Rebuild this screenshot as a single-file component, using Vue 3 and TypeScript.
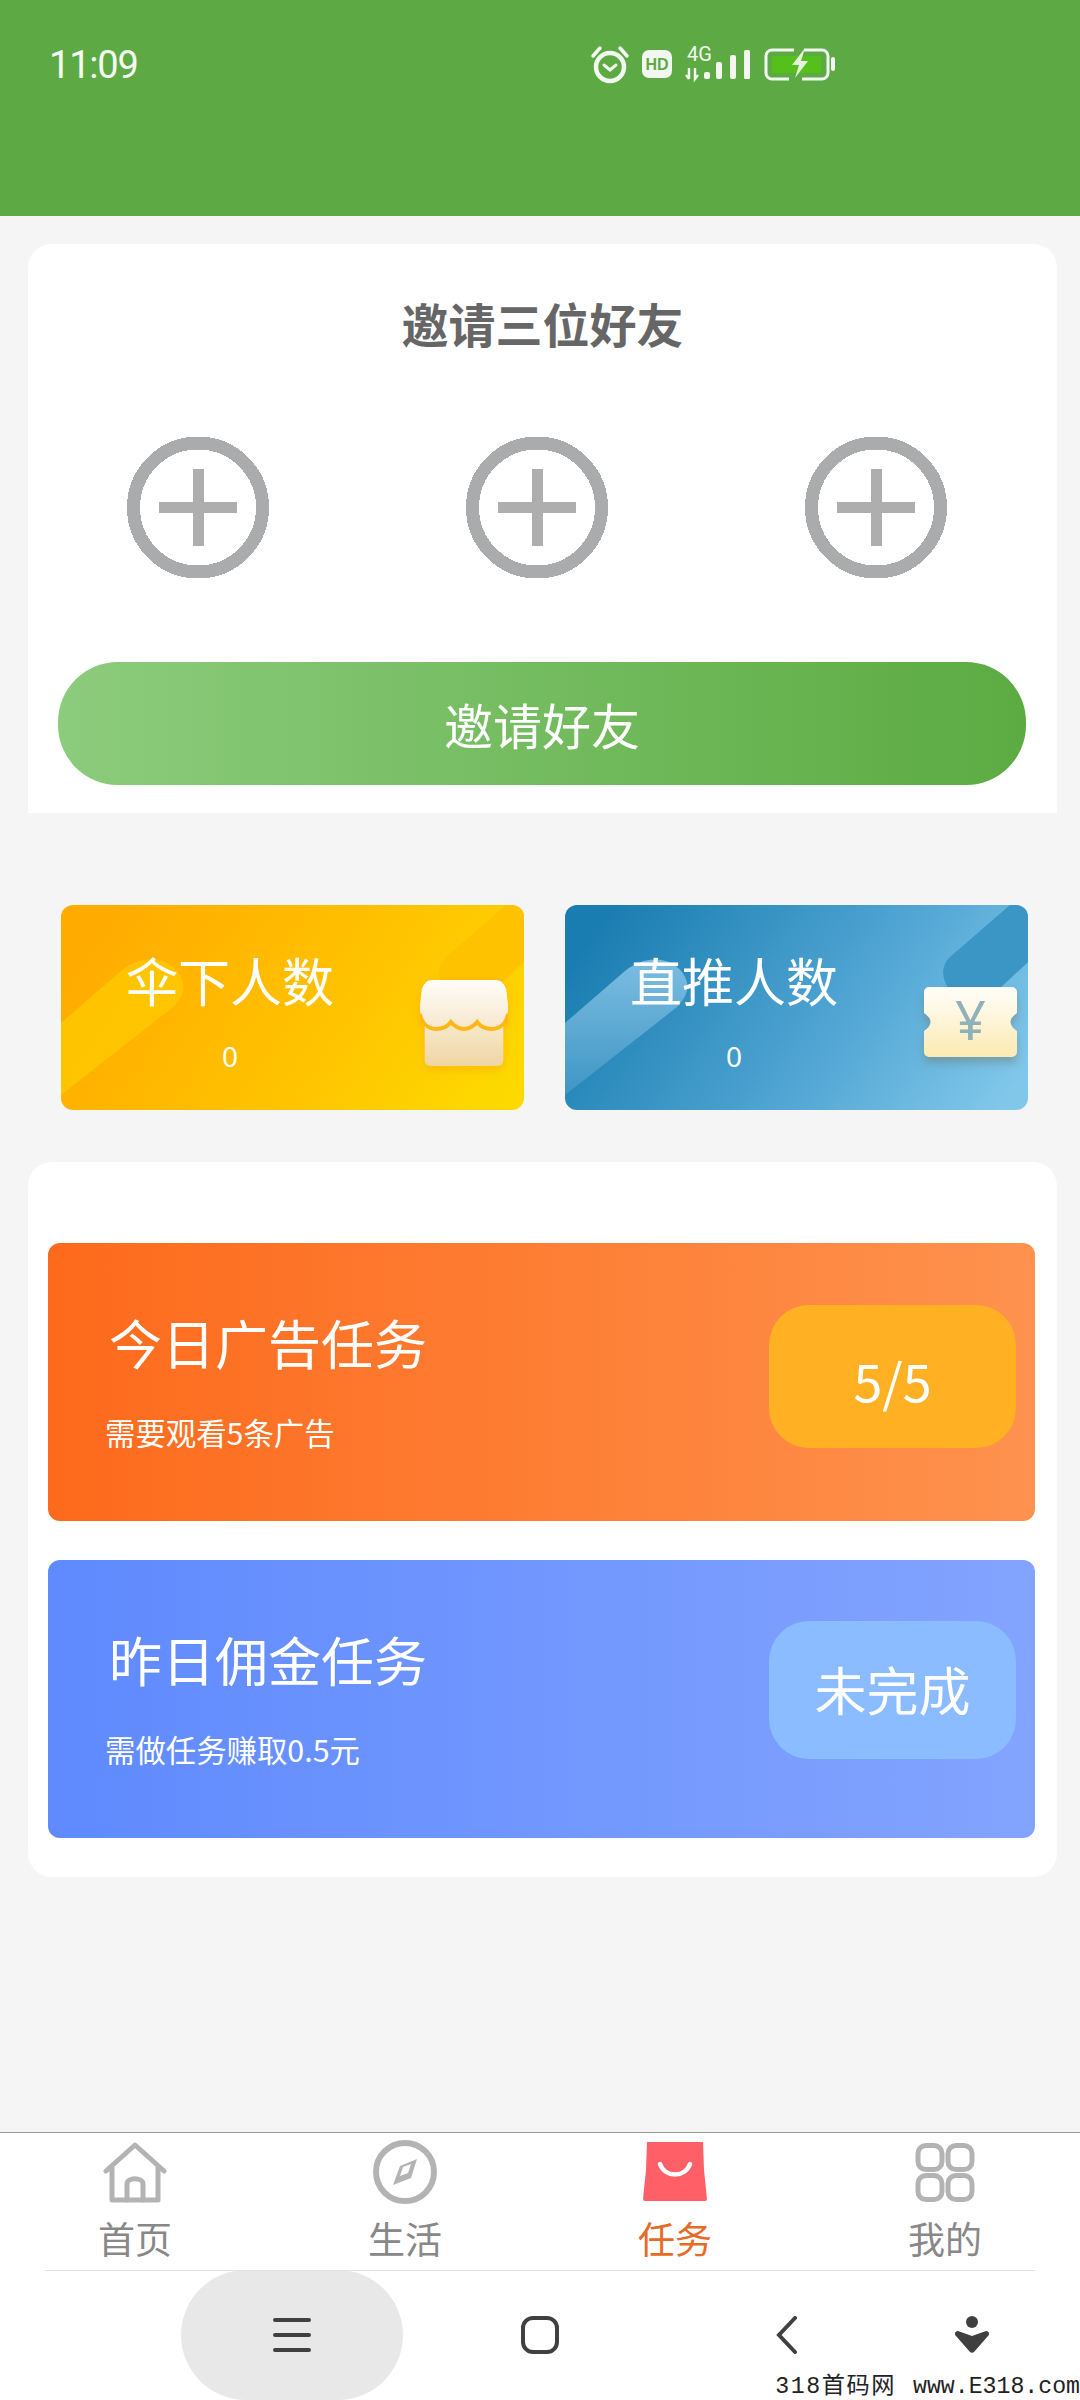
<script setup lang="ts">
interface Task {
  title: string
  desc: string
  badge: string
  tone: string
}

const tasks: Task[] = [
  { title: '今日广告任务', desc: '需要观看5条广告', badge: '5/5', tone: 'orange' },
  { title: '昨日佣金任务', desc: '需做任务赚取0.5元', badge: '未完成', tone: 'blue' }
]

const tabs = ['首页', '生活', '任务', '我的']
</script>

<template>
  <div class="page">
    <header class="top">
      <span class="time">11:09</span>
      <svg class="status" width="260" height="54" viewBox="0 -10 260 54">
        <!-- alarm -->
        <g fill="none" stroke="#f2f8ef" stroke-linecap="round">
          <circle cx="20" cy="23" r="14" stroke-width="4.5" />
          <path d="M14 21l6 5 6-5" stroke-width="3" />
          <path d="M3 12l7-8M37 12l-7-8" stroke-width="3.5" />
        </g>
        <!-- hd -->
        <rect x="52" y="6" width="30" height="28" rx="7" fill="#f2f8ef" />
        <text x="67" y="25.5" class="hd">HD</text>
        <!-- 4g -->
        <text x="97" y="17" class="net">4G</text>
        <path d="M99 24v11M96 31l3 4M105 24v11l3-4" stroke="#f2f8ef" stroke-width="2.4" fill="none" />
        <g fill="#f2f8ef">
          <rect x="114" y="28" width="6" height="7" rx="2" />
          <rect x="126" y="18" width="6" height="17" rx="2" />
          <rect x="140" y="11" width="6" height="24" rx="2" />
          <rect x="154" y="6" width="6" height="29" rx="1.5" />
        </g>
        <!-- battery -->
        <rect x="182" y="12" width="49" height="17" rx="2" fill="#55c01a" />
        <path d="M204 6h-22a6 6 0 0 0-6 6v17a6 6 0 0 0 6 6h17M214 6h18a6 6 0 0 1 6 6v17a6 6 0 0 1-6 6h-20" fill="none" stroke="#f2f8ef" stroke-width="3" />
        <path d="M215 4l-13 17h7l-4 13 13-17h-7z" fill="#e6f2e0" />
        <rect x="241" y="13" width="4" height="14" rx="2" fill="#f2f8ef" />
      </svg>
    </header>

    <section class="invite">
      <h2 class="invite-title">邀请三位好友</h2>
      <div class="slots">
        <svg v-for="n in 3" :key="n" class="slot" width="142" height="143" viewBox="0 0 142 143" shape-rendering="crispEdges">
          <circle cx="71" cy="71.5" r="64.5" fill="none" stroke="#aaabad" stroke-width="13" />
          <path d="M32 66h78v11H32zM65.5 33h11v77h-11z" fill="#aeaeae" />
        </svg>
      </div>
      <div class="invite-btn">邀请好友</div>
    </section>

    <section class="stats">
      <div class="stat yellow">
        <svg class="deco" width="463" height="205" viewBox="0 0 463 205">
          <path d="M0 118L60 66c22-18 50-14 60 6 5 10 2 20-8 30L0 190z" fill="#ffcb00" opacity=".75" />
          <path d="M445 0L385 52c-10 9-8 24 0 33h48l30-28V0z" fill="#ffc200" />
        </svg>
        <div class="stat-text">
          <div class="stat-name">伞下人数</div>
          <div class="stat-num">0</div>
        </div>
        <svg class="stat-icon" width="88" height="86" viewBox="0 0 94 86" preserveAspectRatio="none">
          <defs>
            <linearGradient id="awn" x1="0" y1="0" x2="0" y2="1">
              <stop offset="0" stop-color="#fffdf8" />
              <stop offset="1" stop-color="#f6e8cd" />
            </linearGradient>
            <linearGradient id="shop" x1="0" y1="0" x2="0" y2="1">
              <stop offset="0" stop-color="#f9ecd0" />
              <stop offset="1" stop-color="#efd5a3" />
            </linearGradient>
          </defs>
          <rect x="5" y="38" width="84" height="48" rx="6" fill="url(#shop)" />
          <path d="M13 0h68c6 0 9 4 11 9l2 15c1 14-5 24-17 24-7 0-13-3-16-7-3 4-9 7-14 7s-11-3-14-7c-3 4-9 7-16 7C5 48-1 38 0 24L2 9c2-5 5-9 11-9z" fill="url(#awn)" />
          <path d="M0 34c2 9 8 15 17 15 7 0 13-3 16-7 3 4 9 7 14 7s11-3 14-7c3 4 9 7 16 7 9 0 15-6 17-15" fill="none" stroke="#ffb717" stroke-width="4" />
        </svg>
      </div>
      <div class="stat sky">
        <svg class="deco" width="463" height="205" viewBox="0 0 463 205">
          <defs>
            <linearGradient id="beam" x1="0" y1="0" x2="0" y2="1">
              <stop offset="0" stop-color="#7cbde2" />
              <stop offset="1" stop-color="#3f96c4" />
            </linearGradient>
          </defs>
          <path d="M0 118L60 66c22-18 50-14 60 6 5 10 2 20-8 30L0 190z" fill="url(#beam)" />
          <path d="M445 0L385 52c-10 9-8 24 0 33h48l30-28V0z" fill="#3b95c5" />
        </svg>
        <div class="stat-text">
          <div class="stat-name">直推人数</div>
          <div class="stat-num">0</div>
        </div>
        <svg class="stat-icon ticket" width="93" height="100" viewBox="0 -15 93 100">
          <defs>
            <linearGradient id="tick" x1="0" y1="0" x2="0" y2="1">
              <stop offset="0" stop-color="#fffefa" />
              <stop offset="1" stop-color="#fdeab2" />
            </linearGradient>
          </defs>
          <path d="M5 0h83a5 5 0 0 1 5 5v21Q80 35 93 44v21a5 5 0 0 1-5 5H5a5 5 0 0 1-5-5V44Q13 35 0 26V5a5 5 0 0 1 5-5z" fill="url(#tick)" />
          <text x="46.5" y="53" class="yen">¥</text>
        </svg>
      </div>
    </section>

    <section class="tasks">
      <div v-for="t in tasks" :key="t.title" class="task" :class="t.tone">
        <div class="task-text">
          <div class="task-title">{{ t.title }}</div>
          <div class="task-desc">{{ t.desc }}</div>
        </div>
        <div class="task-badge">{{ t.badge }}</div>
      </div>
    </section>

    <nav class="tabbar">
      <div v-for="(tab, i) in tabs" :key="tab" class="tab" :class="{ on: i === 2 }">
        <svg v-if="i === 0" width="64" height="64" viewBox="0 -2 64 64" fill="none" stroke="#b3b3b3" stroke-width="5" stroke-linejoin="round" stroke-linecap="round">
          <path d="M3 29L32 3l29 26M9 26v32h46V26" />
          <path d="M24 58V42c0-7 16-7 16 0v16" />
        </svg>
        <svg v-else-if="i === 1" width="64" height="64" viewBox="0 0 64 64">
          <circle cx="32" cy="32" r="29" fill="none" stroke="#b3b3b3" stroke-width="6" />
          <path d="M44 19l-6 19-18 7 7-19zM38 24l-8 3-3 9 8-3z" fill="#b3b3b3" fill-rule="evenodd" />
        </svg>
        <svg v-else-if="i === 2" width="64" height="64" viewBox="0 0 64 64">
          <path d="M4 2h56l1 28 3 29-1 2H1l-1-2 3-29z" fill="#ff6067" />
          <path d="M17 24c5 14 25 14 30 0" fill="none" stroke="#fff" stroke-width="4.5" stroke-linecap="round" />
        </svg>
        <svg v-else width="64" height="64" viewBox="1 -2.5 64 64" fill="none" stroke="#b3b3b3" stroke-width="5">
          <rect x="6" y="3" width="24" height="24" rx="8" />
          <rect x="36" y="3" width="24" height="24" rx="8" />
          <rect x="6" y="33" width="24" height="24" rx="8" />
          <rect x="36" y="33" width="24" height="24" rx="8" />
        </svg>
        <span class="tab-label">{{ tab }}</span>
      </div>
    </nav>

    <footer class="sysnav">
      <div class="pill">
        <svg width="38" height="36" viewBox="0 0 38 36">
          <path d="M2 3h34M2 18h34M2 33h34" stroke="#404040" stroke-width="4" stroke-linecap="round" />
        </svg>
      </div>
      <svg class="nav-home" width="38" height="38" viewBox="0 0 38 38">
        <rect x="2" y="2" width="34" height="34" rx="10" fill="none" stroke="#404040" stroke-width="4" />
      </svg>
      <svg class="nav-back" width="22" height="38" viewBox="0 0 22 38">
        <path d="M19 2L3 19l16 17" fill="none" stroke="#404040" stroke-width="4" stroke-linecap="round" />
      </svg>
      <svg class="nav-acc" width="34" height="38" viewBox="0 0 34 38">
        <circle cx="17" cy="6" r="6" fill="#404040" />
        <path d="M3 15l14 5 14-5c3 0 4 3 2 5L19 36c-1 1-3 1-4 0L1 20c-2-2-1-5 2-5z" fill="#404040" />
      </svg>
      <span class="mark"><span class="mark-cn">318首码网</span> www.E318.com</span>
    </footer>
  </div>
</template>

<style>
html,
body {
  margin: 0;
  background: #f5f5f5;
}
</style>

<style scoped>
.page {
  width: 1080px;
  height: 2400px;
  background: #f5f5f5;
  display: flex;
  flex-direction: column;
  font-family: "Noto Sans CJK SC", "Noto Sans", sans-serif;
  overflow: hidden;
}

.top {
  height: 216px;
  flex: none;
  box-sizing: border-box;
  background: #5daa45;
  padding: 34px 0 0 49px;
  display: flex;
  align-items: flex-start;
}

.time {
  width: 90px;
  margin-top: 10px;
  font-family: Roboto, sans-serif;
  font-size: 38px;
  line-height: 42px;
  letter-spacing: -1.2px;
  color: #f4faf0;
}

.status {
  margin-left: 451px;
}

.hd {
  font-family: "Liberation Sans", sans-serif;
  font-size: 16px;
  font-weight: 700;
  fill: #5daa45;
  text-anchor: middle;
}

.net {
  font-family: Roboto, sans-serif;
  font-size: 20px;
  fill: #f2f8ef;
}

.invite {
  margin: 28px 23px 0 28px;
  height: 569px;
  flex: none;
  box-sizing: border-box;
  background: #fff;
  border-radius: 24px 24px 0 0;
  padding-top: 49px;
  display: flex;
  flex-direction: column;
  align-items: center;
}

.invite-title {
  margin: 0;
  font-size: 47px;
  line-height: 60px;
  font-weight: 700;
  color: #666;
}

.slots {
  width: 100%;
  box-sizing: border-box;
  margin-top: 83px;
  padding: 0 110px 0 99px;
  display: flex;
  justify-content: space-between;
}

.invite-btn {
  margin-top: 83px;
  width: 968px;
  height: 123px;
  margin-right: 1px;
  border-radius: 60px;
  background: linear-gradient(90deg, #8ccc7d, #5cab42);
  color: #fff;
  font-size: 49px;
  line-height: 123px;
  text-align: center;
}

.stats {
  margin: 92px 52px 0 61px;
  flex: none;
  display: flex;
  gap: 41px;
}

.stat {
  position: relative;
  width: 463px;
  height: 205px;
  border-radius: 12px;
  overflow: hidden;
  flex: none;
}

.stat.yellow {
  background: linear-gradient(125deg, #ffab00 8%, #ffc400 60%, #fdd900 95%);
}

.stat.sky {
  background: linear-gradient(125deg, #1a7db1 8%, #50a5d3 58%, #80c7ea 95%);
}

.deco {
  position: absolute;
  left: 0;
  top: 0;
}

.stat-text {
  position: relative;
  width: 338px;
  padding-top: 44px;
  color: #fff;
  text-align: center;
}

.stat-name {
  font-size: 52px;
  line-height: 62px;
}

.stat-num {
  margin-top: 27px;
  font-family: "Noto Sans", sans-serif;
  font-size: 28px;
  line-height: 36px;
}

.stat-icon {
  position: absolute;
  left: 359px;
  top: 75px;
  filter: drop-shadow(0 3px 5px rgba(255, 170, 0, 0.6));
}

.stat-icon.ticket {
  left: 359px;
  top: 67px;
  filter: drop-shadow(0 6px 4px rgba(110, 120, 110, 0.45));
}

.yen {
  font-family: "Noto Sans", sans-serif;
  font-size: 54px;
  fill: #8fb1b9;
  text-anchor: middle;
}

.tasks {
  margin: 52px 23px 0 28px;
  height: 715px;
  flex: none;
  box-sizing: border-box;
  background: #fff;
  border-radius: 24px;
  padding: 81px 22px 0 20px;
  display: flex;
  flex-direction: column;
  gap: 39px;
}

.task {
  height: 278px;
  flex: none;
  box-sizing: border-box;
  border-radius: 12px;
  padding: 0 19px 0 57px;
  display: flex;
  justify-content: space-between;
  color: #fff;
}

.task.orange {
  background: linear-gradient(90deg, #fd6a1b, #fe924e);
}

.task.blue {
  background: linear-gradient(90deg, #5f8afe, #83a4fe);
}

.task-text {
  padding-top: 69px;
}

.task-title {
  margin-left: 4px;
  font-size: 53px;
  line-height: 60px;
}

.task-desc {
  margin-top: 40px;
  font-size: 30.4px;
  line-height: 40px;
}

.task-badge {
  align-self: flex-start;
  width: 247px;
  box-sizing: border-box;
  border-radius: 40px;
  margin-top: 62px;
  height: 143px;
  padding-top: 6px;
  font-size: 52px;
  line-height: 137px;
  text-align: center;
  background: #ffb023;
}

.task.blue .task-badge {
  height: 138px;
  margin-top: 61px;
  padding-top: 0;
  line-height: 136px;
  background: #8abcff;
}

.tabbar {
  margin-top: auto;
  height: 138px;
  flex: none;
  box-sizing: border-box;
  background: #fff;
  border-top: 1px solid #999;
  display: flex;
}

.tab {
  width: 270px;
  height: 137px;
  display: flex;
  flex-direction: column;
  align-items: center;
  padding-top: 7px;
  box-sizing: border-box;
}

.tab svg {
  display: block;
}

.tab-label {
  margin-top: 9px;
  font-size: 37px;
  line-height: 50px;
  color: #888;
}

.tab.on .tab-label {
  color: #e66a28;
}

.sysnav {
  position: relative;
  height: 130px;
  flex: none;
  background: #fff;
  box-sizing: border-box;
  padding-left: 181px;
  display: flex;
  align-items: center;
}

.sysnav::before {
  content: "";
  position: absolute;
  left: 45px;
  right: 45px;
  top: 0;
  height: 1px;
  background: #e0e0e0;
}

.pill {
  width: 222px;
  height: 130px;
  flex: none;
  border-radius: 65px;
  background: #e8e8e8;
  display: flex;
  align-items: center;
  justify-content: center;
}

.nav-home {
  margin-left: 118px;
}

.nav-back {
  margin-left: 217px;
}

.nav-acc {
  margin-left: 157px;
}

.mark {
  position: absolute;
  right: 0;
  bottom: 0;
  font-family: "Liberation Mono", "Noto Sans CJK SC", monospace;
  font-size: 23.2px;
  line-height: 26px;
  color: #222;
  white-space: nowrap;
}

.mark-cn {
  letter-spacing: 1.6px;
  margin-right: 3px;
}
</style>
